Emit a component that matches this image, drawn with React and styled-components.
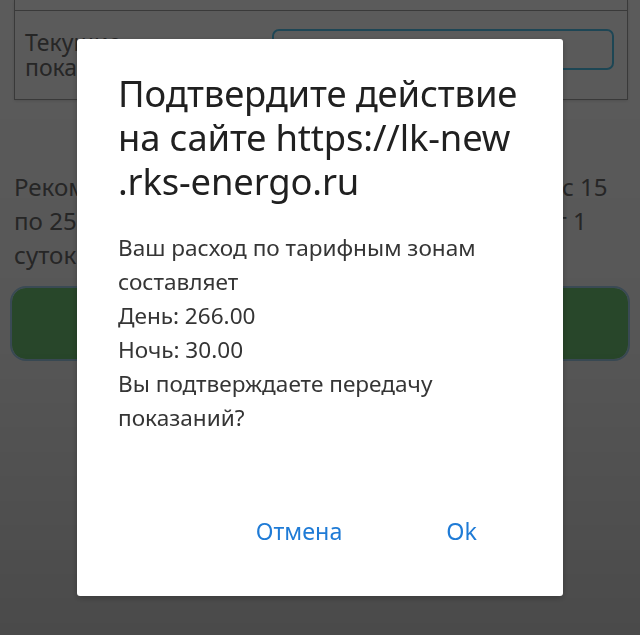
import React from "react";
import styled, { createGlobalStyle } from "styled-components";

const GlobalStyle = createGlobalStyle`
  html, body {
    margin: 0;
    padding: 0;
    background: #ffffff;
    overflow: hidden;
  }
  body {
    font-family: "Noto Sans", "Open Sans", sans-serif;
  }
`;

const Page = styled.div`
  width: 640px;
  height: 635px;
  padding: 0 12px 0 12px;
  box-sizing: border-box;
`;

const Card = styled.div`
  margin: 0 0 0 2px;
  width: 614px;
  border: 1px solid #a3a3a3;
  border-top: none;
  box-sizing: border-box;
  box-shadow: 0 1px 3px rgba(0, 0, 0, 0.12);
`;

const CardRow = styled.div`
  display: flex;
  align-items: ${(p) => (p.top ? "flex-start" : "center")};
  justify-content: space-between;
  height: ${(p) => p.h}px;
  padding: 0 13px 0 10px;
  box-sizing: border-box;
  border-bottom: ${(p) => (p.last ? "none" : "1px solid #a3a3a3")};
`;

const Label = styled.div`
  font-size: 23px;
  line-height: 25px;
  color: #6b6b6b;
  width: 140px;
  margin-top: 19px;
`;

const Field = styled.div`
  width: 342px;
  height: 41px;
  margin-top: 18px;
  border: 2px solid #54c5ef;
  border-radius: 7px;
  box-sizing: border-box;
`;

const Hint = styled.p`
  margin: 70px 0 0 2px;
  font-size: 24.1px;
  line-height: 34px;
  color: #6e6e6e;
  white-space: pre-line;
`;

const SubmitButton = styled.button`
  display: block;
  width: 616px;
  height: 71px;
  margin-top: 16px;
  border: none;
  border-radius: 14px;
  background: #77cf7c;
  outline: 2px solid #a9d8f5;
  outline-offset: 0;
`;

const Overlay = styled.div`
  position: fixed;
  inset: 0;
  background: linear-gradient(
    to bottom,
    rgba(0, 0, 0, 0.643) 0%,
    rgba(0, 0, 0, 0.66) 50%,
    rgba(0, 0, 0, 0.71) 100%
  );
  display: flex;
  align-items: center;
  justify-content: center;
`;

const Dialog = styled.div`
  width: 486px;
  height: 557px;
  background: #ffffff;
  border-radius: 3px;
  box-shadow: 0 2px 6px rgba(0, 0, 0, 0.25);
  padding: 32px 10px 0 41px;
  box-sizing: border-box;
  display: flex;
  flex-direction: column;
`;

const Title = styled.h1`
  margin: 0;
  font-weight: 400;
  font-size: 36.4px;
  line-height: 44px;
  letter-spacing: -0.15px;
  color: #202020;
`;

const Message = styled.div`
  margin-top: 28px;
  font-size: 22.6px;
  line-height: 34px;
  color: #353535;
  white-space: pre-line;
  width: 400px;
`;

const Actions = styled.div`
  margin-top: auto;
  margin-bottom: 50px;
  display: flex;
  justify-content: flex-end;
  gap: 104px;
  padding-right: 76px;
`;

const ActionButton = styled.button`
  border: none;
  background: none;
  padding: 0;
  font-family: inherit;
  font-size: 23.3px;
  line-height: 30px;
  color: #1f7bd6;
  cursor: pointer;
`;

export default function App() {
  return (
    <>
      <GlobalStyle />
      <Page>
        <Card>
          <CardRow h={11} />
          <CardRow h={88} top last>
            <Label>Текущие показания</Label>
            <Field />
          </CardRow>
        </Card>
        <Hint>
          {"Рекомендуем передавать показания в период с 15\nпо 25 число месяца. Обработка данных займёт 1\nсуток."}
        </Hint>
        <SubmitButton aria-label="Передать показания" />
      </Page>
      <Overlay>
        <Dialog role="alertdialog">
          <Title>
            Подтвердите действие
            <br />
            на сайте https://lk-new
            <br />
            .rks-energo.ru
          </Title>
          <Message>
            {"Ваш расход по тарифным зонам составляет\nДень: 266.00\nНочь: 30.00\nВы подтверждаете передачу показаний?"}
          </Message>
          <Actions>
            <ActionButton>Отмена</ActionButton>
            <ActionButton>Ok</ActionButton>
          </Actions>
        </Dialog>
      </Overlay>
    </>
  );
}
